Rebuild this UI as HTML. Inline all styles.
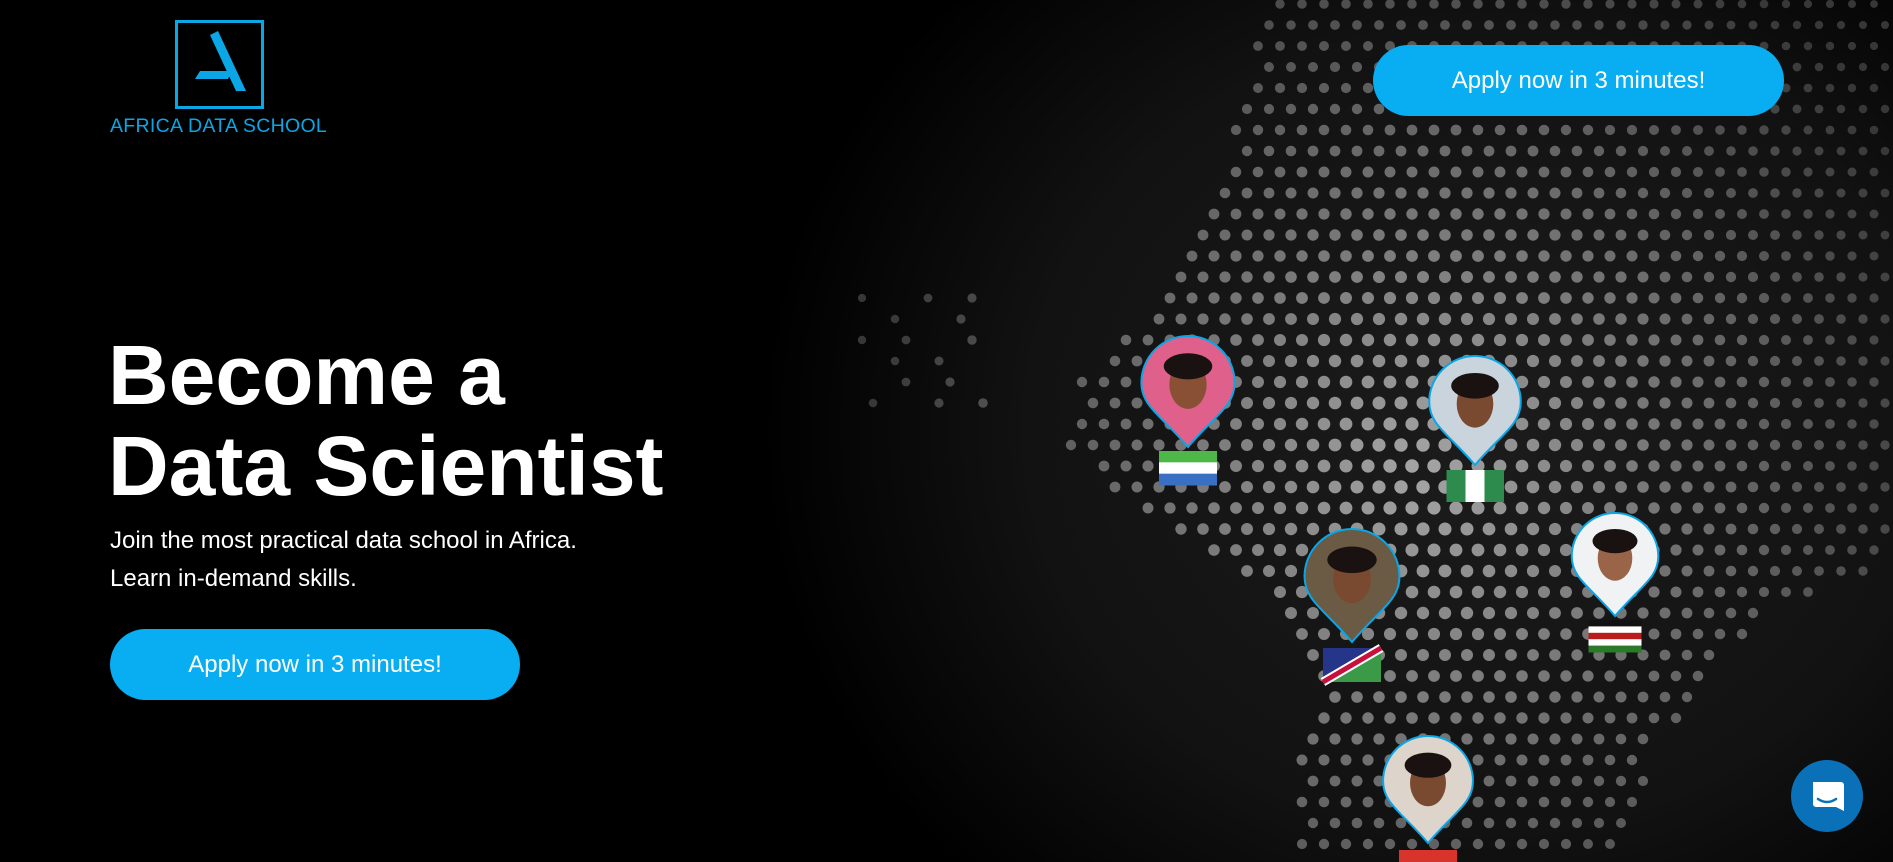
<!DOCTYPE html>
<html><head><meta charset="utf-8">
<style>
html,body{margin:0;padding:0}
body{width:1893px;height:862px;overflow:hidden;position:relative;background:#000;font-family:"Liberation Sans",sans-serif}
#bg{position:absolute;left:0;top:0;width:1893px;height:862px;background:radial-gradient(ellipse 900px 800px at 1480px 430px,#1c1c1c 0%,#121212 50%,#000 80%)}
svg#map{position:absolute;left:0;top:0}
.logo{position:absolute;left:175px;top:20px;width:83px;height:83px;border:3px solid #0aa6e6}
.logotxt{position:absolute;left:110px;top:117px;color:#0aa6e6;font-size:19.5px;font-weight:300;letter-spacing:0.3px;line-height:1}
h1{position:absolute;left:108px;top:330px;margin:0;color:#fff;font-size:84px;font-weight:bold;line-height:91px}
.sub{position:absolute;left:110px;top:522px;color:#fff;font-size:24px;line-height:38px}
.btn{position:absolute;background:#08adf2;color:#fff;border-radius:40px;text-align:center;font-size:24px}
.chat{position:absolute;left:1791px;top:760px;width:72px;height:72px;border-radius:50%;background:#0a70b8}
</style></head><body>
<div id="bg"></div>
<svg id="map" width="1893" height="862"></svg>
<div class="logo"><svg width="83" height="83" viewBox="0 0 83 83"><polygon points="32,12 40,8 68,68 58,68" fill="#0aa6e6"/><polygon points="22,48 54,48 50,56 17,56" fill="#0aa6e6"/></svg></div>
<div class="logotxt">AFRICA DATA SCHOOL</div>
<h1>Become a<br>Data Scientist</h1>
<div class="sub">Join the most practical data school in Africa.<br>Learn in-demand skills.</div>
<div class="btn" style="left:110px;top:629px;width:410px;height:71px;line-height:71px">Apply now in 3 minutes!</div>
<div class="btn" style="left:1373px;top:45px;width:411px;height:71px;line-height:71px">Apply now in 3 minutes!</div>
<div class="chat"><svg width="72" height="72" viewBox="0 0 72 72"><path d="M22 22 h28 a3 3 0 0 1 3 3 v26 l-8-4 h-20 a3 3 0 0 1-3-3 z" fill="#fff"/><path d="M27 39 q9 6 18 0" stroke="#0a70b8" stroke-width="2.5" fill="none" stroke-linecap="round"/></svg></div>
<script>
var svg=document.getElementById('map');
var poly=[[1270,0],[1893,0],[1893,560],[1790,600],[1720,660],[1660,740],[1620,862],[1300,862],[1290,770],[1320,680],[1270,590],[1200,540],[1110,500],[1062,440],[1080,380],[1140,320],[1190,240],[1230,160],[1250,60]];
function inside(x,y){var c=false;for(var i=0,j=poly.length-1;i<poly.length;j=i++){var xi=poly[i][0],yi=poly[i][1],xj=poly[j][0],yj=poly[j][1];if(((yi>y)!=(yj>y))&&(x<(xj-xi)*(y-yi)/(yj-yi)+xi))c=!c;}return c;}
var out='';
for(var y=4;y<870;y+=21){var off=(Math.round(y/21)%2)*11;for(var x=840;x<1900;x+=22){var px=x+off,py=y;
var dx=(px-1420)/480,dy=(py-470)/520;var d=Math.sqrt(dx*dx+dy*dy);
var ok=inside(px,py);
if(!ok&&px>860&&px<990&&py>283&&py<416&&((Math.floor(px/22)*7+Math.floor(py/21)*3)%5<2))ok=true;
if(!ok)continue;
var r=Math.max(3.5,6.8-d*2.2);var g=Math.round(Math.max(55,165-d*95));
out+='<circle cx="'+px+'" cy="'+py+'" r="'+r.toFixed(1)+'" fill="rgb('+g+','+g+','+g+')"/>';}}
function pin(cx,top,tip,bg,skin,flag,fy,fw,fh){var r=(tip-top)*0.42;var cy=top+r;
out+='<path d="M'+cx+' '+tip+' C'+(cx-r*0.6)+' '+(tip-r*0.7)+' '+(cx-r)+' '+(cy+r*0.5)+' '+(cx-r)+' '+cy+' A'+r+' '+r+' 0 1 1 '+(cx+r)+' '+cy+' C'+(cx+r)+' '+(cy+r*0.5)+' '+(cx+r*0.6)+' '+(tip-r*0.7)+' '+cx+' '+tip+' Z" fill="'+bg+'" stroke="#0aa6e6" stroke-width="2"/>';
out+='<ellipse cx="'+cx+'" cy="'+(cy+2)+'" rx="'+(r*0.4)+'" ry="'+(r*0.52)+'" fill="'+skin+'"/>';
out+='<ellipse cx="'+cx+'" cy="'+(cy-r*0.35)+'" rx="'+(r*0.52)+'" ry="'+(r*0.28)+'" fill="#1a1210"/>';
out+=flag(cx-fw/2,fy,fw,fh);}
function stripes(cols,vert){return function(x,y,w,h){var s='';for(var i=0;i<cols.length;i++){s+=vert?'<rect x="'+(x+i*w/cols.length)+'" y="'+y+'" width="'+(w/cols.length+0.5)+'" height="'+h+'" fill="'+cols[i]+'"/>':'<rect x="'+x+'" y="'+(y+i*h/cols.length)+'" width="'+w+'" height="'+(h/cols.length+0.5)+'" fill="'+cols[i]+'"/>';}return s;}}
pin(1188,336,447,'#e0608c','#8a5036',stripes(['#4db848','#fff','#3a70c4']),451,58,34);
pin(1475,356,465,'#c9d4dc','#7a4a30',stripes(['#2e8b4e','#fff','#2e8b4e'],true),470,57,32);
pin(1352,529,642,'#6b5a44','#7a4a30',function(x,y,w,h){return '<rect x="'+x+'" y="'+y+'" width="'+w+'" height="'+h+'" fill="#3a9a48"/><polygon points="'+x+','+y+' '+(x+w)+','+y+' '+x+','+(y+h)+'" fill="#24358a"/><line x1="'+(x+w)+'" y1="'+y+'" x2="'+x+'" y2="'+(y+h)+'" stroke="#fff" stroke-width="9"/><line x1="'+(x+w)+'" y1="'+y+'" x2="'+x+'" y2="'+(y+h)+'" stroke="#c8103e" stroke-width="5"/>';},648,58,34);
pin(1615,513,616,'#f0f2f4','#9a6448',stripes(['#111','#fff','#b81c1c','#fff','#2a7a2a']),620,53,32);
pin(1428,736,843,'#ddd5cc','#7a4a30',stripes(['#d8342c','#2a7a40']),850,58,24);
svg.innerHTML=out;
</script>
</body></html>
